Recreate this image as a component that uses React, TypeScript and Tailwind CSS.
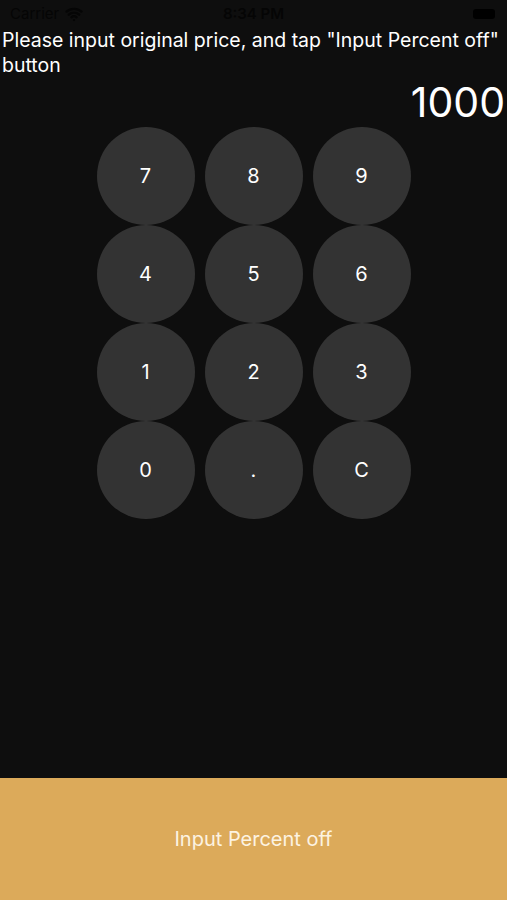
import { Wifi } from "lucide-react"

const keys = ["7", "8", "9", "4", "5", "6", "1", "2", "3", "0", ".", "C"]

export default function App() {
    return (
        <div className="flex flex-col h-screen bg-[#0e0e0e] text-white font-['Inter',sans-serif]">
            <div className="relative flex items-center h-[28px] px-[10px] text-[15px]">
                <span className="text-[#050505]">Carrier</span>
                <Wifi size={18} strokeWidth={3} className="ml-[6px] text-[#050505]" />
                <span className="absolute left-1/2 -translate-x-1/2 text-[#050505] font-semibold">8:34 PM</span>
                <div className="absolute right-[12px] top-[9px] w-[22px] h-[10px] rounded-[3px] bg-black" />
            </div>
            <p className="px-[2px] text-[19.5px] leading-[25px] text-white">
                Please input original price, and tap "Input Percent off" button
            </p>
            <div className="text-right text-[41px] leading-[49px] pr-[2px]">1000</div>
            <div className="grid grid-cols-[98px_98px_98px] gap-x-[10px] justify-center">
                {keys.map((k) => (
                    <button
                        key={k}
                        className="w-[98px] h-[98px] rounded-full bg-[#333333] text-[20px] text-white flex items-center justify-center"
                    >
                        {k}
                    </button>
                ))}
            </div>
            <div className="flex-1" />
            <button className="h-[122px] w-full bg-[#dcaa5a] text-[20px] text-[#fcf3e2]">
                Input Percent off
            </button>
        </div>
    )
}
